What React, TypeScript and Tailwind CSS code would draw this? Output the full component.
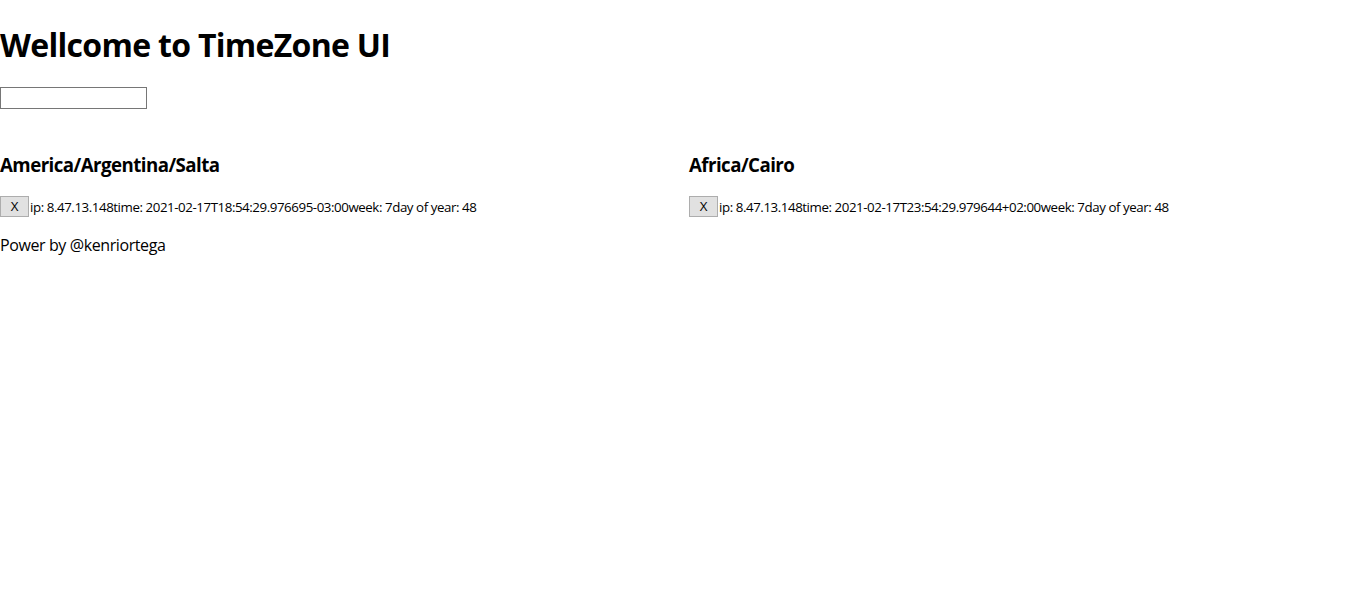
const zones = [
  {
    name: "America/Argentina/Salta",
    ip: "8.47.13.148",
    time: "2021-02-17T18:54:29.976695-03:00",
    week: 7,
    day: 48,
  },
  {
    name: "Africa/Cairo",
    ip: "8.47.13.148",
    time: "2021-02-17T23:54:29.979644+02:00",
    week: 7,
    day: 48,
  },
];

function ZoneCard({ name, ip, time, week, day }: (typeof zones)[number]) {
  return (
    <div>
      <h3 className="text-[18.7px] font-bold leading-[25px] tracking-[-0.55px]">{name}</h3>
      <div className="flex items-center mt-[19px] text-[13.3px] leading-[20px] tracking-[-0.43px]">
        <button
          type="button"
          className="w-[29px] h-[21px] bg-[#e1e1e1] border border-[#adadad] text-[13.3px] leading-none tracking-normal"
        >
          X
        </button>
        <span className="ml-[1px]">ip: {ip}</span>
        <span>time: {time}</span>
        <span>week: {week}</span>
        <span>day of year: {day}</span>
      </div>
    </div>
  );
}

export default function App() {
  return (
    <div className="bg-white min-h-[592px] text-black font-['Open_Sans',sans-serif] text-[16px]">
      <h1 className="text-[32px] font-bold leading-[43px] pt-[23px] tracking-[-0.7px]">
        Wellcome to TimeZone UI
      </h1>
      <input
        type="text"
        className="block mt-[21px] w-[147px] h-[22px] border border-[#767676] text-[13.3px] px-[2px]"
      />
      <div className="grid grid-cols-[689px_1fr] mt-[43px]">
        {zones.map((z) => (
          <ZoneCard key={z.name} {...z} />
        ))}
      </div>
      <p className="mt-[17px] leading-[22px] tracking-[-0.4px]">Power by @kenriortega</p>
    </div>
  );
}
